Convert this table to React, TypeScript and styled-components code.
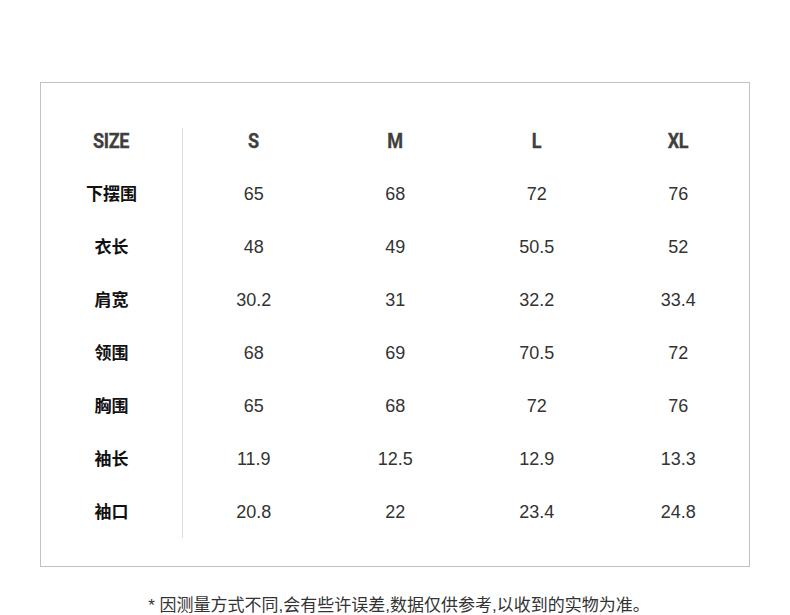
import React from "react";
import styled, { createGlobalStyle } from "styled-components";

const Global = createGlobalStyle`
  html, body { margin: 0; padding: 0; background: #fff; }
  body { font-family: "Liberation Sans", Arial, sans-serif; }
`;

const Page = styled.div`
  width: 790px;
  padding-top: 82px;
`;

const Box = styled.div`
  margin-left: 40px;
  width: 708px;
  height: 438px;
  border: 1px solid #c2c2c2;
  padding-top: 45px;
  box-sizing: content-box;
  display: flex;
`;

const Column = styled.div<{ $label?: boolean }>`
  display: flex;
  flex-direction: column;
  align-items: center;
  flex: ${(p) => (p.$label ? "0 0 141px" : "1 1 0")};
  border-right: ${(p) => (p.$label ? "1px solid #dcdcdc" : "none")};
  height: 410px;
`;

const HeadCell = styled.div`
  height: 25px;
  margin-bottom: 13px;
  display: flex;
  align-items: center;
  justify-content: center;
`;

const HeadText = styled.span`
  display: inline-block;
  font-family: "Roboto", "DejaVu Sans Condensed", sans-serif;
  font-weight: 700;
  font-size: 21px;
  color: #3f3f3f;
  transform: scaleX(0.86);
  letter-spacing: -0.4px;
  -webkit-text-stroke: 0.3px #3f3f3f;
`;

const Cell = styled.div<{ $label?: boolean }>`
  height: 53px;
  box-sizing: border-box;
  padding-top: ${(p) => (p.$label ? "0" : "4px")};
  display: flex;
  align-items: center;
  justify-content: center;
  font-family: ${(p) =>
    p.$label
      ? `"Noto Sans CJK SC", sans-serif`
      : `"Liberation Sans", Arial, sans-serif`};
  font-weight: ${(p) => (p.$label ? 700 : 400)};
  font-size: ${(p) => (p.$label ? "17px" : "18px")};
  color: ${(p) => (p.$label ? "#111" : "#333")};
`;

const Note = styled.div`
  margin-top: 29px;
  padding-left: 8px;
  text-align: center;
  font-family: "Liberation Sans", "Noto Sans CJK SC", sans-serif;
  font-size: 17px;
  color: #333;
  line-height: 20px;
`;

const labels = ["下摆围", "衣长", "肩宽", "领围", "胸围", "袖长", "袖口"];
const sizes: { name: string; values: string[] }[] = [
  { name: "S", values: ["65", "48", "30.2", "68", "65", "11.9", "20.8"] },
  { name: "M", values: ["68", "49", "31", "69", "68", "12.5", "22"] },
  { name: "L", values: ["72", "50.5", "32.2", "70.5", "72", "12.9", "23.4"] },
  { name: "XL", values: ["76", "52", "33.4", "72", "76", "13.3", "24.8"] },
];

export default function App() {
  return (
    <Page>
      <Global />
      <Box>
        <Column $label>
          <HeadCell>
            <HeadText>SIZE</HeadText>
          </HeadCell>
          {labels.map((l) => (
            <Cell $label key={l}>
              {l}
            </Cell>
          ))}
        </Column>
        {sizes.map((s) => (
          <Column key={s.name}>
            <HeadCell>
              <HeadText>{s.name}</HeadText>
            </HeadCell>
            {s.values.map((v, i) => (
              <Cell key={i}>{v}</Cell>
            ))}
          </Column>
        ))}
      </Box>
      <Note>* 因测量方式不同,会有些许误差,数据仅供参考,以收到的实物为准。</Note>
    </Page>
  );
}
